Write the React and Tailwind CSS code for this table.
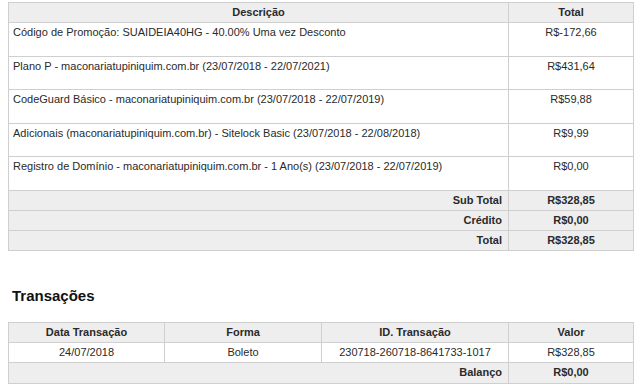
const items = [
  { desc: "Código de Promoção: SUAIDEIA40HG - 40.00% Uma vez Desconto", total: "R$-172,66" },
  { desc: "Plano P - maconariatupiniquim.com.br (23/07/2018 - 22/07/2021)", total: "R$431,64" },
  { desc: "CodeGuard Básico - maconariatupiniquim.com.br (23/07/2018 - 22/07/2019)", total: "R$59,88" },
  { desc: "Adicionais (maconariatupiniquim.com.br) - Sitelock Basic (23/07/2018 - 22/08/2018)", total: "R$9,99" },
  { desc: "Registro de Domínio - maconariatupiniquim.com.br - 1 Ano(s) (23/07/2018 - 22/07/2019)", total: "R$0,00" },
];

const summary = [
  { label: "Sub Total", value: "R$328,85" },
  { label: "Crédito", value: "R$0,00" },
  { label: "Total", value: "R$328,85" },
];

const cell = "border border-[#cfcfcf] px-[4px]";

export default function App() {
  return (
    <div className="w-[642px] h-[392px] bg-white text-[#2a2a2a] text-[11px] leading-[13px] font-['Liberation_Sans',Arial,sans-serif] pt-[2px] px-[8px]">
      <table className="w-[625px] border-collapse table-fixed">
        <colgroup>
          <col className="w-[500px]" />
          <col className="w-[125px]" />
        </colgroup>
        <thead>
          <tr className="bg-[#eeeeee] h-[20px]">
            <th className={`${cell} text-center font-bold`}>Descrição</th>
            <th className={`${cell} text-center font-bold`}>Total</th>
          </tr>
        </thead>
        <tbody>
          {items.map((it, i) => (
            <tr key={i} className="h-[33.6px]">
              <td className={`${cell} align-top pt-[3px]`}>{it.desc}</td>
              <td className={`${cell} align-top pt-[3px] text-center`}>{it.total}</td>
            </tr>
          ))}
          {summary.map((s) => (
            <tr key={s.label} className="bg-[#eeeeee] h-[20px]">
              <td className={`${cell} text-right font-bold pr-[6px]`}>{s.label}</td>
              <td className={`${cell} text-center font-bold`}>{s.value}</td>
            </tr>
          ))}
        </tbody>
      </table>

      <h2 className="mt-[36px] ml-[4px] text-[15px] leading-[18px] font-bold text-[#111]">Transações</h2>

      <table className="mt-[17px] w-[625px] border-collapse table-fixed">
        <colgroup>
          <col className="w-[156px]" />
          <col className="w-[157px]" />
          <col className="w-[187px]" />
          <col className="w-[125px]" />
        </colgroup>
        <thead>
          <tr className="bg-[#eeeeee] h-[20px]">
            <th className={`${cell} text-center font-bold`}>Data Transação</th>
            <th className={`${cell} text-center font-bold`}>Forma</th>
            <th className={`${cell} text-center font-bold`}>ID. Transação</th>
            <th className={`${cell} text-center font-bold`}>Valor</th>
          </tr>
        </thead>
        <tbody>
          <tr className="h-[20px]">
            <td className={`${cell} text-center`}>24/07/2018</td>
            <td className={`${cell} text-center`}>Boleto</td>
            <td className={`${cell} text-center`}>230718-260718-8641733-1017</td>
            <td className={`${cell} text-center`}>R$328,85</td>
          </tr>
          <tr className="bg-[#eeeeee] h-[21px]">
            <td colSpan={3} className={`${cell} text-right font-bold pr-[6px]`}>Balanço</td>
            <td className={`${cell} text-center font-bold`}>R$0,00</td>
          </tr>
        </tbody>
      </table>
    </div>
  );
}
